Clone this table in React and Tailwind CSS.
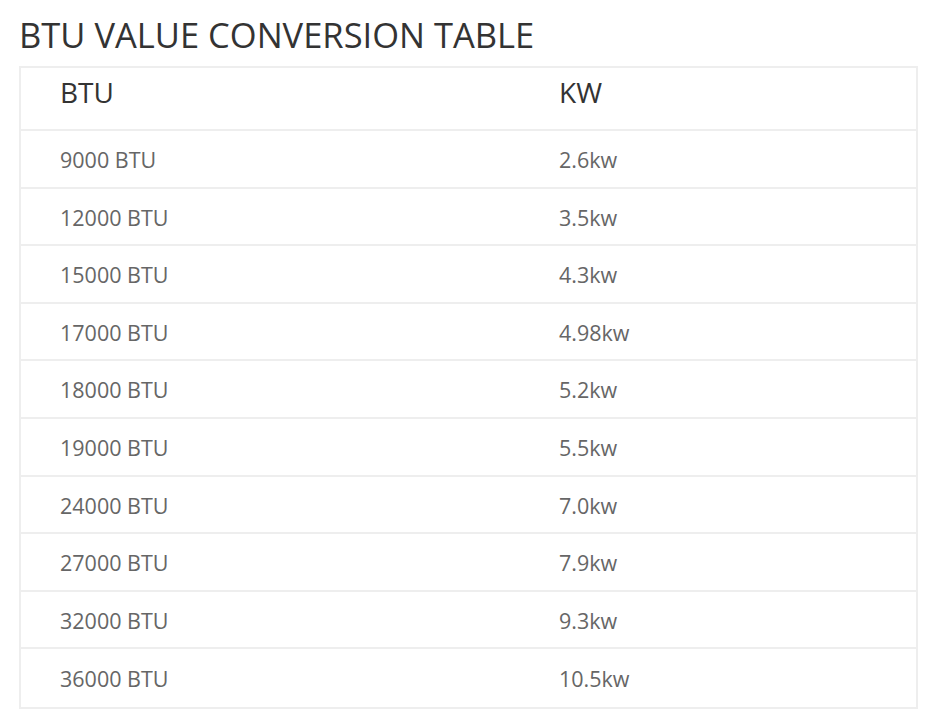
const rows = [
  ['9000 BTU', '2.6kw'],
  ['12000 BTU', '3.5kw'],
  ['15000 BTU', '4.3kw'],
  ['17000 BTU', '4.98kw'],
  ['18000 BTU', '5.2kw'],
  ['19000 BTU', '5.5kw'],
  ['24000 BTU', '7.0kw'],
  ['27000 BTU', '7.9kw'],
  ['32000 BTU', '9.3kw'],
  ['36000 BTU', '10.5kw'],
];

export default function App() {
  return (
    <div className="min-h-screen bg-white px-[19px] font-['Open_Sans',sans-serif]">
      <h1 className="pt-[13px] mb-[10px] text-[34.5px] leading-[43px] text-[#333] font-normal">
        BTU VALUE CONVERSION TABLE
      </h1>
      <div className="w-[899px] border-2 border-[#eeeeee]">
        {/* Header */}
        <div className="grid grid-cols-[499px_1fr] h-[63px] border-b-2 border-[#eeeeee]">
          <div className="pl-[39px] pt-[10px] text-[28px] leading-none text-[#333]">BTU</div>
          <div className="pl-[39px] pt-[10px] text-[28px] leading-none text-[#333]">KW</div>
        </div>
        {rows.map(([btu, kw], i) => (
          <div
            key={btu}
            className={`grid grid-cols-[499px_1fr] h-[57.6px] pt-[2px] items-center text-[21.5px] leading-none text-[#666] ${
              i < rows.length - 1 ? 'border-b-2 border-[#eeeeee]' : ''
            }`}
          >
            <div className="pl-[39px]">{btu}</div>
            <div className="pl-[39px]">{kw}</div>
          </div>
        ))}
      </div>
    </div>
  );
}
